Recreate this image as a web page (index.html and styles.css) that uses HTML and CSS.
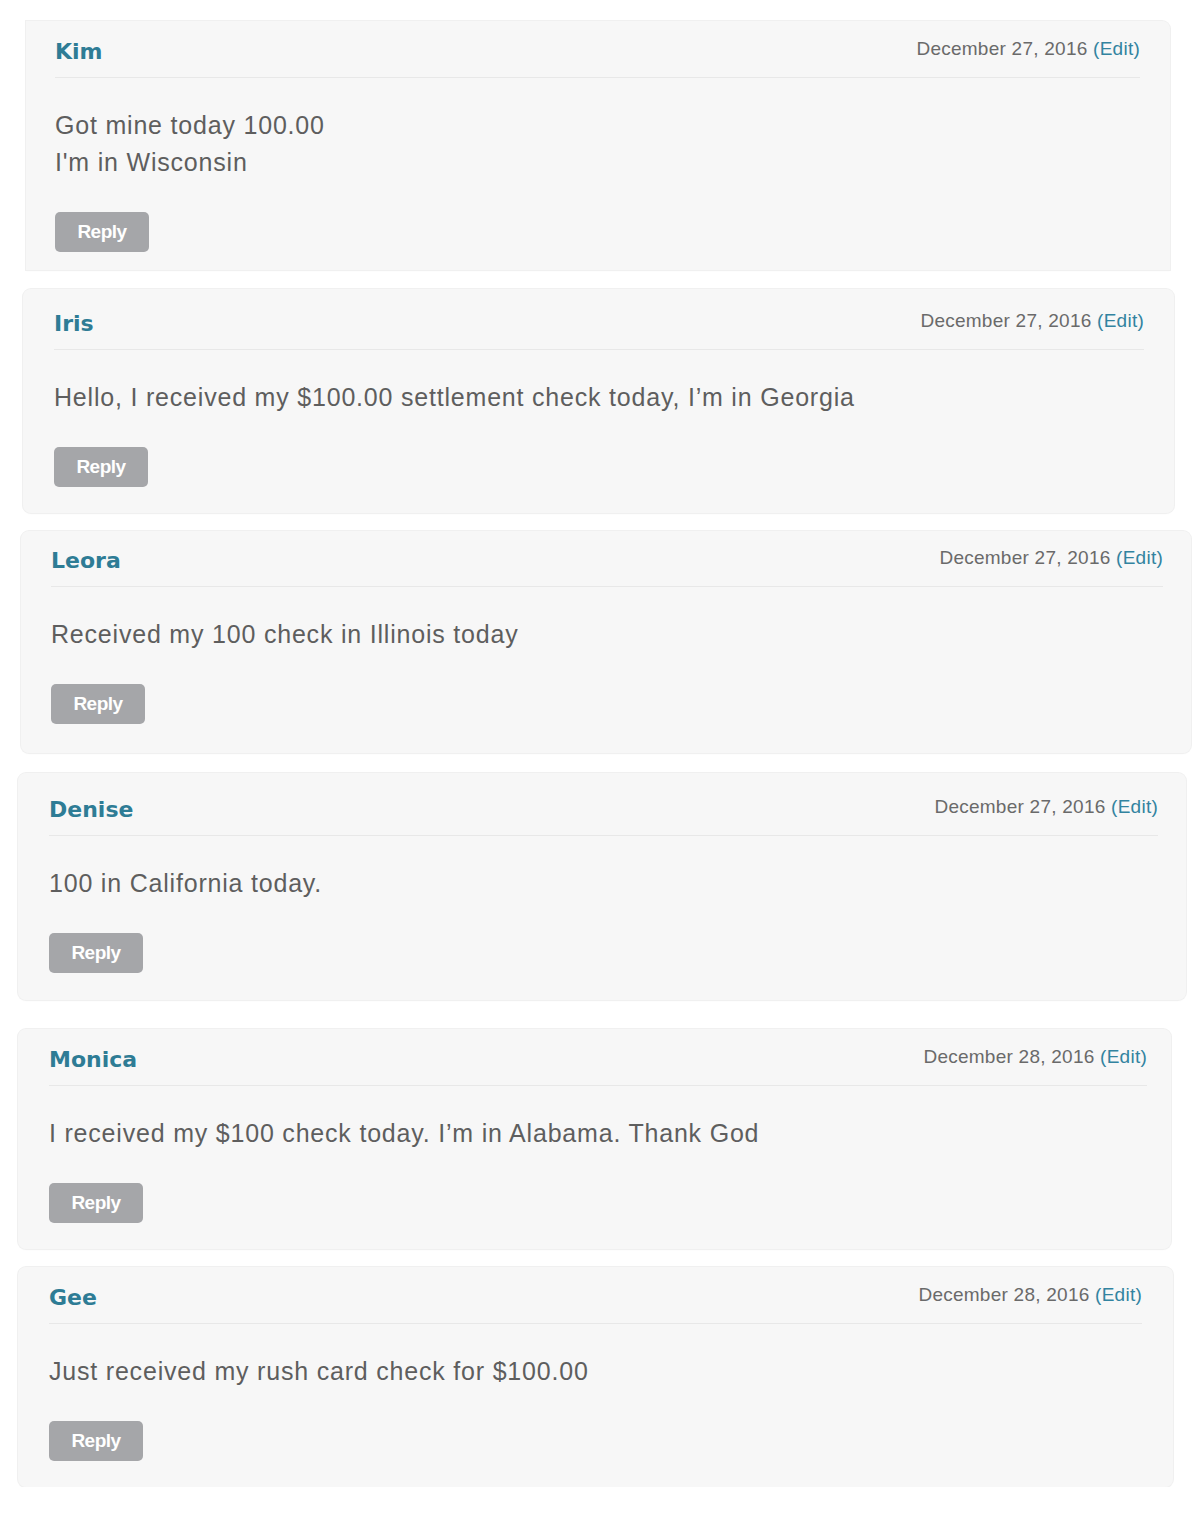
FILE: index.html
```html
<!DOCTYPE html>
<html lang="en">
<head>
  <meta charset="UTF-8">
  <meta name="viewport" content="width=device-width, initial-scale=1.0">
  <title>Comments</title>
  <link rel="stylesheet" href="styles.css">
</head>
<body>
  <div class="comments">
    <div class="comment comment-kim">
      <div class="comment-head">
        <span class="author">Kim</span>
        <span class="date">December 27, 2016 <a href="#" class="edit">(Edit)</a></span>
      </div>
      <div class="comment-body">Got mine today 100.00<br>I'm in Wisconsin</div>
      <button class="btn-reply">Reply</button>
    </div>

    <div class="comment comment-iris">
      <div class="comment-head">
        <span class="author">Iris</span>
        <span class="date">December 27, 2016 <a href="#" class="edit">(Edit)</a></span>
      </div>
      <div class="comment-body">Hello, I received my $100.00 settlement check today, I’m in Georgia</div>
      <button class="btn-reply">Reply</button>
    </div>

    <div class="comment comment-leora">
      <div class="comment-head">
        <span class="author">Leora</span>
        <span class="date">December 27, 2016 <a href="#" class="edit">(Edit)</a></span>
      </div>
      <div class="comment-body">Received my 100 check in Illinois today</div>
      <button class="btn-reply">Reply</button>
    </div>

    <div class="comment comment-denise">
      <div class="comment-head">
        <span class="author">Denise</span>
        <span class="date">December 27, 2016 <a href="#" class="edit">(Edit)</a></span>
      </div>
      <div class="comment-body">100 in California today.</div>
      <button class="btn-reply">Reply</button>
    </div>

    <div class="comment comment-monica">
      <div class="comment-head">
        <span class="author">Monica</span>
        <span class="date">December 28, 2016 <a href="#" class="edit">(Edit)</a></span>
      </div>
      <div class="comment-body">I received my $100 check today. I’m in Alabama. Thank God</div>
      <button class="btn-reply">Reply</button>
    </div>

    <div class="comment comment-gee">
      <div class="comment-head">
        <span class="author">Gee</span>
        <span class="date">December 28, 2016 <a href="#" class="edit">(Edit)</a></span>
      </div>
      <div class="comment-body">Just received my rush card check for $100.00</div>
      <button class="btn-reply">Reply</button>
    </div>
  </div>
</body>
</html>
```

FILE: styles.css
```css
body {
  margin: 0;
  background-color: #fff;
  font-family: 'Liberation Sans', Arial, sans-serif;
  color: #5a5a5a;
}
.comments {
  display: flex;
  flex-direction: column;
  align-items: flex-start;
}
.comment {
  box-sizing: border-box;
  padding: 15px 30px 26px 30px;
  background-color: #f7f7f7;
  border-radius: 8px;
  box-shadow: 0 0 0 1px #f0f0f0, 0 1px 2px rgba(0, 0, 0, 0.03);
}
.comment-head {
  display: flex;
  justify-content: space-between;
  align-items: flex-start;
  padding-top: 1px;
  padding-bottom: 10px;
  border-bottom: 1px solid #e8e8e8;
}
.author {
  font-family: 'DejaVu Sans', Verdana, sans-serif;
  font-weight: bold;
  font-size: 22px;
  line-height: 30px;
  color: #2e7c95;
}
.date {
  font-size: 19px;
  letter-spacing: 0.25px;
  line-height: 24px;
  color: #6a6a6a;
}
.edit {
  color: #3283a0;
  text-decoration: none;
}
.comment-body {
  margin-top: 29px;
  font-size: 25px;
  letter-spacing: 0.8px;
  line-height: 37px;
  color: #5e5e5e;
}
.btn-reply {
  display: block;
  margin-top: 31px;
  width: 94px;
  height: 40px;
  padding: 0;
  border: none;
  border-radius: 5px;
  background-color: #a5a6a9;
  color: #fff;
  font-family: 'Liberation Sans', Arial, sans-serif;
  font-weight: bold;
  font-size: 19px;
  letter-spacing: -0.5px;
  cursor: pointer;
}

/* each card sits a little differently in the capture */
.comment-kim {
  margin: 21px 0 0 26px;
  width: 1144px;
  padding: 15px 30px 18px 29px;
  border-radius: 0 8px 0 0;
}
.comment-iris {
  margin: 19px 0 0 23px;
  width: 1151px;
  padding: 19px 30px 26px 31px;
}
.comment-leora {
  margin: 18px 0 0 21px;
  width: 1170px;
  padding: 14px 28px 29px 30px;
}
.comment-denise {
  margin: 20px 0 0 18px;
  width: 1168px;
  padding: 21px 28px 27px 31px;
}
.comment-monica {
  margin: 29px 0 0 18px;
  width: 1153px;
  padding: 15px 24px 26px 31px;
}
.comment-gee {
  margin: 18px 0 0 18px;
  width: 1155px;
  padding: 15px 31px 26px 31px;
}
```
